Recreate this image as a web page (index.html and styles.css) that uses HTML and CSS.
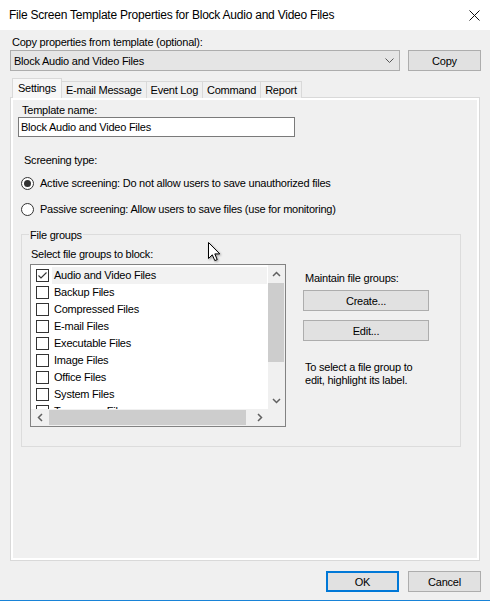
FILE: index.html
```html
<!DOCTYPE html>
<html>
<head>
<meta charset="utf-8">
<title>File Screen Template Properties</title>
<link rel="stylesheet" href="styles.css">
</head>
<body>
<div class="window">
  <div class="titlebar">
    <span class="title">File Screen Template Properties for Block Audio and Video Files</span>
    <svg class="close" width="11" height="11" viewBox="0 0 11 11"><path d="M0.5 0.5L10.5 10.5M10.5 0.5L0.5 10.5" stroke="#111" stroke-width="1" fill="none"/></svg>
  </div>
  <div class="dialog">
    <div class="copy-label">Copy properties from template (optional):</div>
    <div class="copy-row">
      <div class="combo">
        <span>Block Audio and Video Files</span>
        <svg width="9" height="5" viewBox="0 0 9 5"><polyline points="0.5,0.5 4.5,4.5 8.5,0.5" stroke="#555" stroke-width="1" fill="none"/></svg>
      </div>
      <div class="btn">Copy</div>
    </div>
    <div class="tabs">
      <div class="tab selected">Settings</div>
      <div class="tab">E-mail Message</div>
      <div class="tab">Event Log</div>
      <div class="tab">Command</div>
      <div class="tab">Report</div>
    </div>
    <div class="panel">
      <div class="field-label">Template name:</div>
      <div class="textbox">Block Audio and Video Files</div>
      <div class="section-label">Screening type:</div>
      <div class="radio-row first"><span class="radio checked"></span><span>Active screening: Do not allow users to save unauthorized files</span></div>
      <div class="radio-row second"><span class="radio"></span><span>Passive screening: Allow users to save files (use for monitoring)</span></div>
      <div class="groupbox">
        <span class="legend">File groups</span>
        <div class="group-body">
          <div class="list-col">
            <div class="list-label">Select file groups to block:</div>
            <div class="listbox">
              <div class="items">
                <div class="item focused"><span class="check"><svg width="11" height="11" viewBox="0 0 11 11"><polyline points="1.5,5.5 4,8 9.5,2.5" stroke="#333" stroke-width="1.1" fill="none"/></svg></span><span class="item-text">Audio and Video Files</span></div>
                <div class="item"><span class="check"></span><span class="item-text">Backup Files</span></div>
                <div class="item"><span class="check"></span><span class="item-text">Compressed Files</span></div>
                <div class="item"><span class="check"></span><span class="item-text">E-mail Files</span></div>
                <div class="item"><span class="check"></span><span class="item-text">Executable Files</span></div>
                <div class="item"><span class="check"></span><span class="item-text">Image Files</span></div>
                <div class="item"><span class="check"></span><span class="item-text">Office Files</span></div>
                <div class="item"><span class="check"></span><span class="item-text">System Files</span></div>
                <div class="item"><span class="check"></span><span class="item-text">Temporary Files</span></div>
              </div>
              <div class="vscroll">
                <div class="sb-btn"><svg width="9" height="6" viewBox="0 0 9 6"><polyline points="1,5 4.5,1.5 8,5" stroke="#606060" stroke-width="1.5" fill="none"/></svg></div>
                <div class="vtrack"><div class="vthumb"></div></div>
                <div class="sb-btn"><svg width="9" height="6" viewBox="0 0 9 6"><polyline points="1,1 4.5,4.5 8,1" stroke="#606060" stroke-width="1.5" fill="none"/></svg></div>
              </div>
              <div class="hscroll">
                <div class="sb-btn h"><svg width="6" height="9" viewBox="0 0 6 9"><polyline points="5,1 1.5,4.5 5,8" stroke="#606060" stroke-width="1.5" fill="none"/></svg></div>
                <div class="htrack"><div class="hthumb"></div></div>
                <div class="sb-btn h"><svg width="6" height="9" viewBox="0 0 6 9"><polyline points="1,1 4.5,4.5 1,8" stroke="#606060" stroke-width="1.5" fill="none"/></svg></div>
              </div>
              <div class="corner"></div>
            </div>
          </div>
          <div class="side-col">
            <div class="side-label">Maintain file groups:</div>
            <div class="btn side-btn create">Create...</div>
            <div class="btn side-btn edit">Edit...</div>
            <div class="hint">To select a file group to<br>edit, highlight its label.</div>
          </div>
        </div>
      </div>
    </div>
    <div class="footer">
      <div class="btn ok">OK</div>
      <div class="btn">Cancel</div>
    </div>
  </div>
  <svg class="cursor" width="14" height="21" viewBox="0 0 14 21"><path d="M0.5 0.5L0.5 16.5L4.3 12.8L6.8 18.6L9.2 17.6L6.8 11.9L11.8 11.9Z" fill="#fff" stroke="#000" stroke-width="1" stroke-linejoin="miter"/></svg>
</div>
</body>
</html>
```
FILE: styles.css
```css
* { box-sizing: border-box; }
html, body { margin: 0; padding: 0; }
body {
  width: 490px;
  height: 601px;
  overflow: hidden;
  background: #f0f0f0;
  color: #000;
  font-family: "Liberation Sans", Arial, sans-serif;
  font-size: 11px;
  letter-spacing: -0.23px;
}
.window { position: relative; width: 490px; height: 601px; }

.titlebar {
  height: 30px;
  background: #fff;
  display: flex;
  align-items: center;
  justify-content: space-between;
  padding: 0 10px 0 9px;
}
.title { font-size: 12px; line-height: 14px; }
.close { display: block; }

.dialog {
  height: 571px;
  display: flex;
  flex-direction: column;
  padding: 5px 9px 0 10px;
  border-bottom: 1px solid #1883d7;
}
.copy-label { line-height: 14px; margin-left: 2px; }
.copy-row { display: flex; gap: 8px; margin-top: 1px; height: 21px; }
.combo {
  width: 390px;
  height: 21px;
  border: 1px solid #adadad;
  background: #e5e5e5;
  display: flex;
  align-items: center;
  justify-content: space-between;
  padding: 0 5px 0 3px;
}
.combo svg { display: block; }
.btn {
  width: 73px;
  height: 21px;
  background: #e1e1e1;
  border: 1px solid #adadad;
  display: flex;
  align-items: center;
  justify-content: center;
}

.tabs {
  display: flex;
  align-items: flex-end;
  height: 20px;
  margin: 7px 0 -1px 2px;
  position: relative;
  z-index: 1;
}
.tab {
  height: 17px;
  line-height: 16px;
  padding: 0 4px;
  border: 1px solid #d9d9d9;
  border-bottom: none;
  background: #f0f0f0;
  margin-left: -1px;
}
.tab.selected {
  height: 20px;
  line-height: 18px;
  padding: 0 5px;
  margin-left: 0;
  background: #f7f7f7;
  position: relative;
  z-index: 2;
}

.panel {
  flex: 1;
  margin-right: 1px;
  border: 1px solid #d9d9d9;
  box-shadow: inset 0 0 0 2px #fff;
  background: #f0f0f0;
  display: flex;
  flex-direction: column;
  align-items: flex-start;
}
.field-label { margin: 5px 0 0 11px; line-height: 14px; }
.textbox {
  margin-left: 7px;
  width: 277px;
  height: 20px;
  border: 1px solid #7a7a7a;
  background: #fff;
  padding-left: 2px;
  line-height: 18px;
}
.section-label { margin: 16px 0 0 13px; line-height: 14px; }
.radio-row {
  display: flex;
  align-items: center;
  gap: 6px;
  height: 14px;
  margin-left: 10px;
  line-height: 14px;
}
.radio-row.first { margin-top: 9px; }
.radio-row.second { margin-top: 12px; }
.radio {
  width: 13px;
  height: 13px;
  border: 1px solid #333;
  border-radius: 50%;
  background: #fff;
  display: flex;
  align-items: center;
  justify-content: center;
  flex: none;
}
.radio.checked::after {
  content: "";
  width: 7px;
  height: 7px;
  border-radius: 50%;
  background: #333;
}

.groupbox {
  margin: 18px 0 0 10px;
  width: 440px;
  border: 1px solid #dcdcdc;
  padding: 0 0 19px 8px;
  display: flex;
  flex-direction: column;
  align-items: flex-start;
}
.legend {
  margin-top: -7px;
  line-height: 14px;
  background: #f0f0f0;
  padding: 0 1px;
  margin-left: -1px;
}
.group-body { display: flex; margin-top: 5px; }
.list-label { margin-left: 1px; line-height: 14px; }
.listbox {
  margin-top: 3px;
  width: 256px;
  height: 163px;
  border: 1px solid #828282;
  background: #fff;
  display: grid;
  grid-template-columns: 1fr 17px;
  grid-template-rows: 1fr 17px;
}
.items { overflow: hidden; padding-top: 2px; }
.item {
  height: 17px;
  display: flex;
  align-items: center;
  padding-left: 5px;
}
.check {
  width: 13px;
  height: 13px;
  border: 1px solid #333;
  background: #fff;
  flex: none;
  margin-right: 3px;
}
.check svg { display: block; }
.item-text {
  flex: 1;
  height: 17px;
  line-height: 17px;
  padding-left: 2px;
  margin-right: 1px;
  white-space: nowrap;
}
.item.focused .item-text { background: #f2f2f2; }

.vscroll { background: #f0f0f0; display: flex; flex-direction: column; }
.sb-btn {
  height: 17px;
  flex: none;
  display: flex;
  align-items: center;
  justify-content: center;
}
.sb-btn svg { display: block; }
.sb-btn.h { width: 17px; height: 17px; }
.vtrack { flex: 1; padding: 1px 1px 0 0; }
.vthumb { height: 79px; background: #cdcdcd; }
.hscroll { background: #f0f0f0; display: flex; }
.htrack { flex: 1; padding: 1px 0 0 1px; }
.hthumb { width: 197px; height: 15px; background: #cdcdcd; }
.corner { background: #f0f0f0; }

.side-col { margin-left: 17px; padding-top: 24px; display: flex; flex-direction: column; }
.side-label { margin-left: 2px; line-height: 14px; }
.side-btn { width: 126px; }
.side-btn.create { margin-top: 5px; }
.side-btn.edit { margin-top: 9px; }
.hint { margin: 20px 0 0 2px; line-height: 13px; }

.footer {
  display: flex;
  justify-content: flex-end;
  gap: 9px;
  margin-top: 10px;
  padding-bottom: 8px;
}
.btn.ok { border: 2px solid #0078d7; }

.cursor {
  position: absolute;
  left: 208px;
  top: 242px;
  filter: drop-shadow(1px 1px 1px rgba(0,0,0,0.35));
}
```
